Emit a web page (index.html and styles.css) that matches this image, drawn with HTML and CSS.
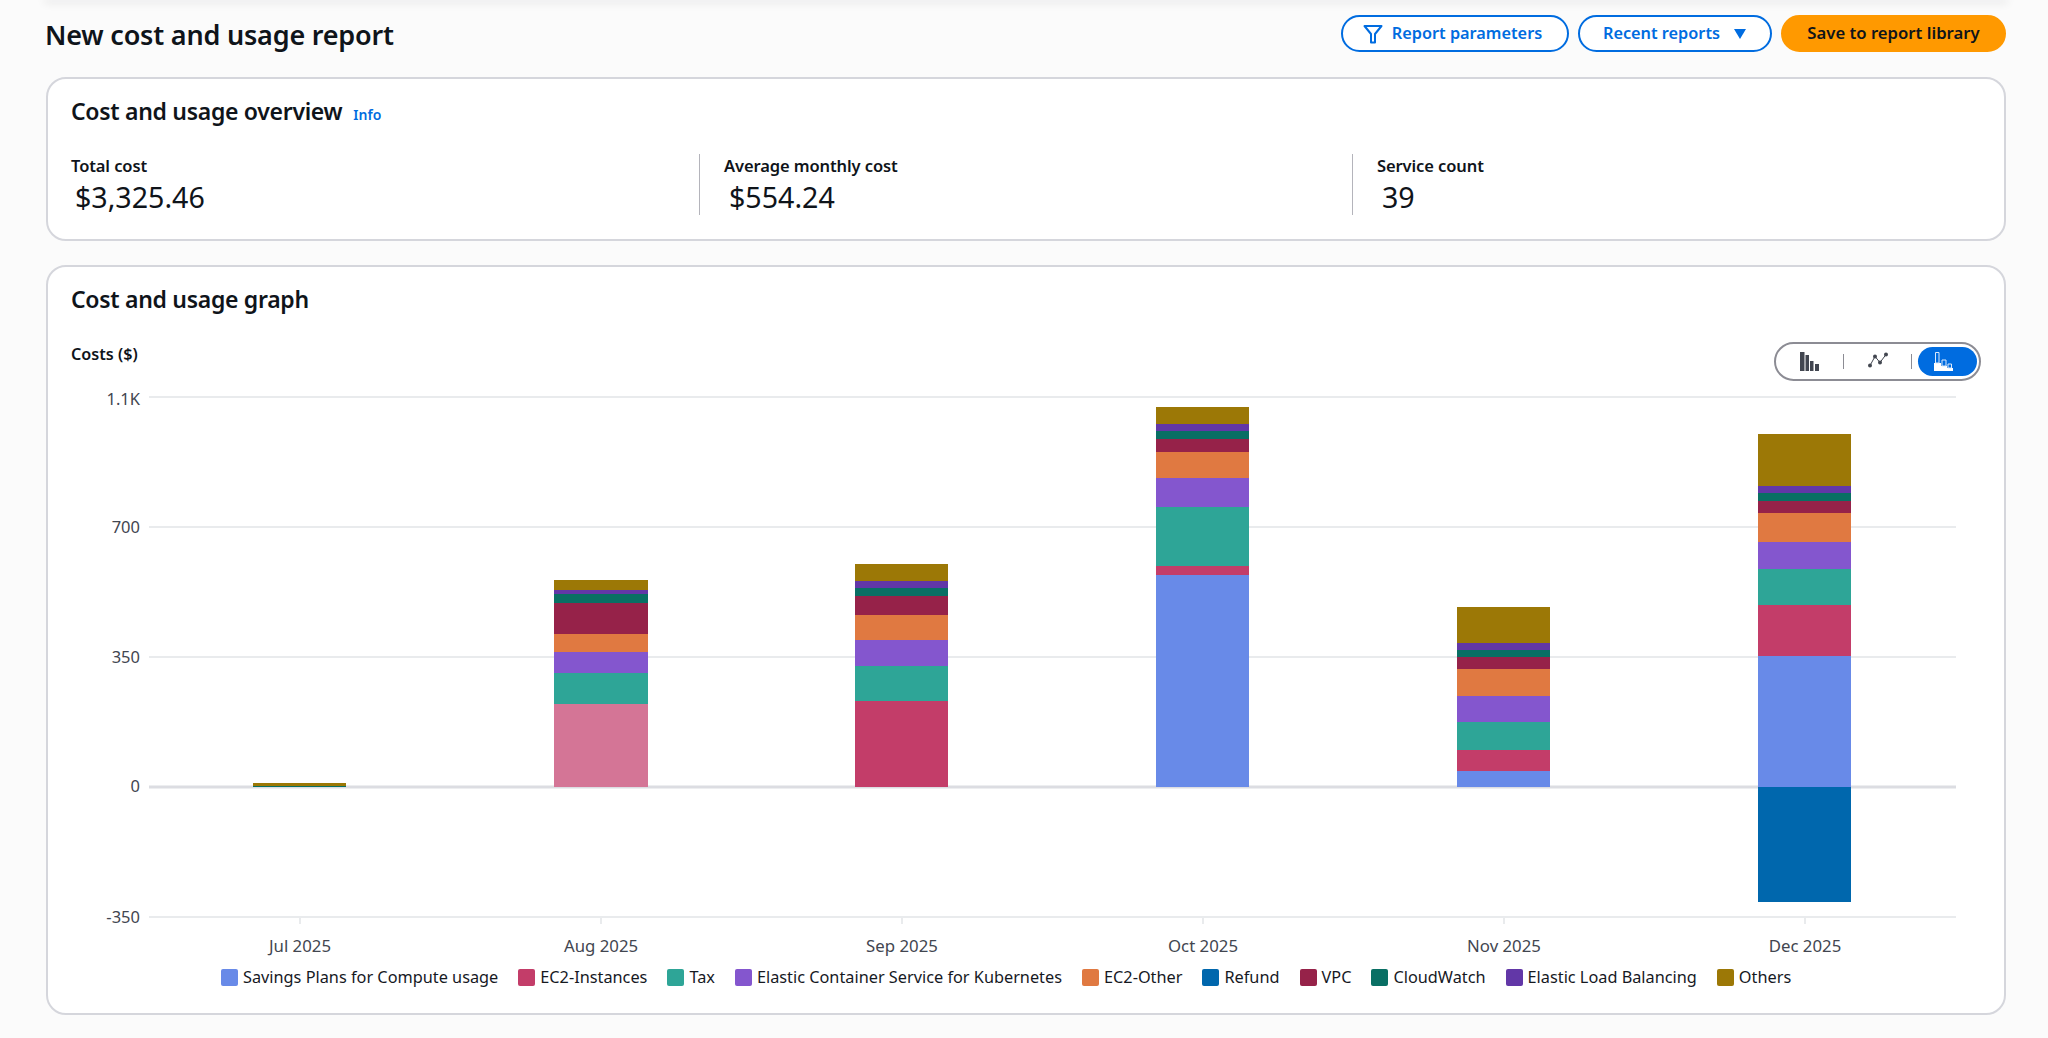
FILE: index.html
```html
<!DOCTYPE html>
<html lang="en">
<head>
<meta charset="utf-8">
<title>New cost and usage report</title>
<link rel="stylesheet" href="styles.css">
</head>
<body>
<div class="page">
  <div class="topstrip"></div>
  <header class="head">
    <h1 class="title">New cost and usage report</h1>
    <div class="actions">
      <button class="btn btn-params">
        <svg class="ico-filter" viewBox="0 0 20 20"><path d="M1.500 2h17l-6.500 8v8.500h-4V10z"/></svg>
        Report parameters
      </button>
      <button class="btn btn-recent">Recent reports
        <svg class="ico-caret" viewBox="0 0 14 12"><path d="M1 1h12L7 11z"/></svg>
      </button>
      <button class="btn btn-save">Save to report library</button>
    </div>
  </header>

  <section class="card card-overview">
    <div class="card-title-row">
      <h2 class="card-title">Cost and usage overview</h2>
      <a class="info">Info</a>
    </div>
    <div class="metrics">
      <div class="metric">
        <div class="metric-label">Total cost</div>
        <div class="metric-value">$3,325.46</div>
      </div>
      <div class="metric metric-div">
        <div class="metric-label">Average monthly cost</div>
        <div class="metric-value">$554.24</div>
      </div>
      <div class="metric metric-div">
        <div class="metric-label">Service count</div>
        <div class="metric-value">39</div>
      </div>
    </div>
  </section>

  <section class="card card-graph">
    <h2 class="card-title graph-title">Cost and usage graph</h2>
    <div class="graph-tools">
      <div class="axis-name">Costs ($)</div>
      <div class="toggle">
        <span class="seg seg-a">
          <svg class="ico-chart" viewBox="0 0 20 20"><path class="ink" d="M0 0h4.500v19H0zM5.500 3h3.500v16H5.500zM10 9h3.500v10H10zM15 12h4v7h-4z"/></svg>
        </span>
        <span class="sep"></span>
        <span class="seg seg-b">
          <svg class="ico-chart" viewBox="0 0 20 20"><path class="ink-line" d="M2 13.500 7 4.500l5 6 6-8"/><circle class="ink" cx="2" cy="13.500" r="2"/><circle class="ink" cx="7" cy="4.500" r="2"/><circle class="ink" cx="12" cy="10.500" r="2"/><circle class="ink" cx="18" cy="2.500" r="2"/></svg>
        </span>
        <span class="sep"></span>
        <span class="seg-on">
          <svg class="ico-chart" viewBox="0 0 20 20"><path class="white" d="M0 11h7v8H0zM7 14h6v5H7zM13 16h6v3h-6z"/><path class="white-line" d="M1.500 .500h3.500v10.500H1.500zM8 8h4v6H8zM14 12h3.500v4H14z"/></svg>
        </span>
      </div>
    </div>

    <svg class="plot" viewBox="48 382 1956 578" role="img">
      <g class="grid">
        <line x1="149" x2="1956" y1="397" y2="397"/>
        <line x1="149" x2="1956" y1="527" y2="527"/>
        <line x1="149" x2="1956" y1="657" y2="657"/>
        <line x1="149" x2="1956" y1="917" y2="917"/>
        <line x1="300" x2="300" y1="917" y2="924"/>
        <line x1="601" x2="601" y1="917" y2="924"/>
        <line x1="902" x2="902" y1="917" y2="924"/>
        <line x1="1203" x2="1203" y1="917" y2="924"/>
        <line x1="1504" x2="1504" y1="917" y2="924"/>
        <line x1="1805" x2="1805" y1="917" y2="924"/>
      </g>
      <line class="zero" x1="149" x2="1956" y1="787" y2="787"/>

      <g class="ylabels">
        <text x="140" y="405">1.1K</text>
        <text x="140" y="533">700</text>
        <text x="140" y="663">350</text>
        <text x="140" y="792">0</text>
        <text x="140" y="923">-350</text>
      </g>
      <g class="xlabels">
        <text x="300" y="952">Jul 2025</text>
        <text x="601" y="952">Aug 2025</text>
        <text x="902" y="952">Sep 2025</text>
        <text x="1203" y="952">Oct 2025</text>
        <text x="1504" y="952">Nov 2025</text>
        <text x="1805" y="952">Dec 2025</text>
      </g>

      <!-- Jul -->
      <rect class="c-oth" x="253" y="783" width="93" height="3"/>
      <rect class="c-cw" x="253" y="786" width="93" height="1"/>

      <!-- Aug -->
      <rect class="c-oth" x="554" y="580" width="94" height="10"/>
      <rect class="c-elb" x="554" y="590" width="94" height="4"/>
      <rect class="c-cw" x="554" y="594" width="94" height="9"/>
      <rect class="c-vpc" x="554" y="603" width="94" height="31"/>
      <rect class="c-ec2o" x="554" y="634" width="94" height="18"/>
      <rect class="c-eks" x="554" y="652" width="94" height="21"/>
      <rect class="c-tax" x="554" y="673" width="94" height="31"/>
      <rect class="c-ec2l" x="554" y="704" width="94" height="83"/>

      <!-- Sep -->
      <rect class="c-oth" x="855" y="564" width="93" height="17"/>
      <rect class="c-elb" x="855" y="581" width="93" height="7"/>
      <rect class="c-cw" x="855" y="588" width="93" height="8"/>
      <rect class="c-vpc" x="855" y="596" width="93" height="19"/>
      <rect class="c-ec2o" x="855" y="615" width="93" height="25"/>
      <rect class="c-eks" x="855" y="640" width="93" height="26"/>
      <rect class="c-tax" x="855" y="666" width="93" height="35"/>
      <rect class="c-ec2" x="855" y="701" width="93" height="86"/>

      <!-- Oct -->
      <rect class="c-oth" x="1156" y="407" width="93" height="17"/>
      <rect class="c-elb" x="1156" y="424" width="93" height="7"/>
      <rect class="c-cw" x="1156" y="431" width="93" height="8"/>
      <rect class="c-vpc" x="1156" y="439" width="93" height="13"/>
      <rect class="c-ec2o" x="1156" y="452" width="93" height="26"/>
      <rect class="c-eks" x="1156" y="478" width="93" height="29"/>
      <rect class="c-tax" x="1156" y="507" width="93" height="59"/>
      <rect class="c-ec2" x="1156" y="566" width="93" height="9"/>
      <rect class="c-sp" x="1156" y="575" width="93" height="212"/>

      <!-- Nov -->
      <rect class="c-oth" x="1457" y="607" width="93" height="36"/>
      <rect class="c-elb" x="1457" y="643" width="93" height="7"/>
      <rect class="c-cw" x="1457" y="650" width="93" height="7"/>
      <rect class="c-vpc" x="1457" y="657" width="93" height="12"/>
      <rect class="c-ec2o" x="1457" y="669" width="93" height="27"/>
      <rect class="c-eks" x="1457" y="696" width="93" height="26"/>
      <rect class="c-tax" x="1457" y="722" width="93" height="28"/>
      <rect class="c-ec2" x="1457" y="750" width="93" height="21"/>
      <rect class="c-sp" x="1457" y="771" width="93" height="16"/>

      <!-- Dec -->
      <rect class="c-oth" x="1758" y="434" width="93" height="52"/>
      <rect class="c-elb" x="1758" y="486" width="93" height="7"/>
      <rect class="c-cw" x="1758" y="493" width="93" height="8"/>
      <rect class="c-vpc" x="1758" y="501" width="93" height="12"/>
      <rect class="c-ec2o" x="1758" y="513" width="93" height="29"/>
      <rect class="c-eks" x="1758" y="542" width="93" height="27"/>
      <rect class="c-tax" x="1758" y="569" width="93" height="36"/>
      <rect class="c-ec2" x="1758" y="605" width="93" height="51"/>
      <rect class="c-sp" x="1758" y="656" width="93" height="131"/>
      <rect class="c-ref" x="1758" y="787" width="93" height="115"/>
    </svg>

    <ul class="legend">
      <li class="legend-item"><i class="swatch c-sp"></i>Savings Plans for Compute usage</li>
      <li class="legend-item"><i class="swatch c-ec2"></i>EC2-Instances</li>
      <li class="legend-item"><i class="swatch c-tax"></i>Tax</li>
      <li class="legend-item"><i class="swatch c-eks"></i>Elastic Container Service for Kubernetes</li>
      <li class="legend-item"><i class="swatch c-ec2o"></i>EC2-Other</li>
      <li class="legend-item"><i class="swatch c-ref"></i>Refund</li>
      <li class="legend-item"><i class="swatch c-vpc"></i>VPC</li>
      <li class="legend-item"><i class="swatch c-cw"></i>CloudWatch</li>
      <li class="legend-item"><i class="swatch c-elb"></i>Elastic Load Balancing</li>
      <li class="legend-item"><i class="swatch c-oth"></i>Others</li>
    </ul>
  </section>
</div>
</body>
</html>
```
FILE: styles.css
```css
* { box-sizing: border-box; }
html, body { margin: 0; height: 100%; }
body {
  background: #fbfbfb;
  color: #0f141a;
  font-family: "Noto Sans", "Open Sans", sans-serif;
  overflow: hidden;
}
.page { display: flex; flex-direction: column; width: 2048px; height: 1038px; padding: 0 42px 0 46px; }
.topstrip { flex: none; height: 0; box-shadow: 0 1px 8px 2px rgba(15, 20, 26, .1); }

.head { flex: none; display: flex; justify-content: space-between; align-items: center; height: 37px; margin: 15px 0 25px; }
.title { margin: 0 0 -2px -1px; font-size: 27px; font-weight: 600; letter-spacing: -.2px; line-height: 37px; }
.actions { display: flex; gap: 9px; }
.btn {
  display: flex; align-items: center; justify-content: center;
  height: 37px; border-radius: 19px; border: 2px solid #006ce0;
  background: #fff; color: #006ce0; padding: 0;
  font: 600 16.3px/1 "Noto Sans", sans-serif;
}
.btn-params { width: 228px; gap: 9px; padding-right: 5px; }
.btn-recent { width: 194px; gap: 13px; }
.btn-save { width: 225px; background: #ff9900; border-color: #ff9900; color: #0f141a; font-size: 16.7px; }
.ico-filter { width: 20px; height: 20px; fill: none; stroke: #006ce0; stroke-width: 2; stroke-linejoin: round; }
.ico-caret { width: 14px; height: 12px; fill: #006ce0; }

.card { flex: none; background: #fff; border: 2px solid #d5d6dc; border-radius: 20px; }
.card-overview { height: 164px; padding: 0 23px; margin-bottom: 24px; }
.card-title-row { display: flex; align-items: baseline; gap: 11px; padding-top: 16px; height: 61px; }
.card-title { margin: 0; font-size: 23px; font-weight: 600; letter-spacing: -.3px; line-height: 32px; }
.info { color: #006ce0; font-size: 14px; font-weight: 600; }
.metrics { display: grid; grid-template-columns: 628px 653px 1fr; margin-top: 14px; }
.metric { height: 61px; }
.metric-div { border-left: 1px solid #b4b4bb; padding-left: 24px; }
.metric-label { font-size: 16.5px; font-weight: 600; line-height: 24px; letter-spacing: -.1px; }
.metric-value { font-size: 28.6px; line-height: 38px; padding-left: 4px; color: #0f141a; }
.metric-div .metric-value { padding-left: 5px; }

.card-graph { height: 750px; padding: 0; }
.graph-title { padding: 16px 0 0 23px; }
.graph-tools { display: flex; justify-content: space-between; align-items: flex-start; height: 39px; margin-top: 27px; padding: 0 23px; }
.axis-name { font-size: 16.2px; font-weight: 600; line-height: 24px; }
.toggle {
  display: flex; align-items: center; width: 207px; height: 39px;
  border: 2px solid #8c8c94; border-radius: 20px; background: #fff;
}
.seg { display: flex; justify-content: center; align-items: center; }
.seg-a { width: 67px; }
.seg-b { width: 67px; }
.sep { width: 1px; height: 15px; background: #8c8c94; }
.seg-on {
  display: flex; justify-content: center; align-items: center;
  width: 59px; height: 29px; margin-left: 6px; padding-right: 8px; border-radius: 15px; background: #006ce0;
}
.ico-chart { width: 20px; height: 20px; display: block; }
.ink { fill: #424650; }
.ink-line { fill: none; stroke: #424650; stroke-width: 1; }
.white { fill: #fff; }
.white-line { fill: none; stroke: #dbe9fb; stroke-width: 1; }

.plot { display: block; width: 1956px; height: 578px; margin-top: 1px; }
.grid line { stroke: #e9ebed; stroke-width: 2; }
.zero { stroke: #dcdde2; stroke-width: 3; }
.ylabels text { text-anchor: end; font-size: 16.5px; fill: #424650; }
.xlabels text { text-anchor: middle; font-size: 16.8px; fill: #424650; }

.c-sp { fill: #688ae8; background: #688ae8; }
.c-ec2 { fill: #c33d69; background: #c33d69; }
.c-ec2l { fill: #d47596; }
.c-tax { fill: #2ea597; background: #2ea597; }
.c-eks { fill: #8456ce; background: #8456ce; }
.c-ec2o { fill: #e07941; background: #e07941; }
.c-ref { fill: #0067ad; background: #0067ad; }
.c-vpc { fill: #962249; background: #962249; }
.c-cw { fill: #096f64; background: #096f64; }
.c-elb { fill: #6237a7; background: #6237a7; }
.c-oth { fill: #9c7806; background: #9c7806; }

.legend { list-style: none; display: flex; gap: 20px; margin: 8px 0 0; padding: 0 0 0 173px; }
.legend-item { display: flex; align-items: center; gap: 5px; height: 18px; font-size: 16.3px; white-space: nowrap; color: #16191f; }
.swatch { display: block; width: 17px; height: 17px; border-radius: 2px; }
```
